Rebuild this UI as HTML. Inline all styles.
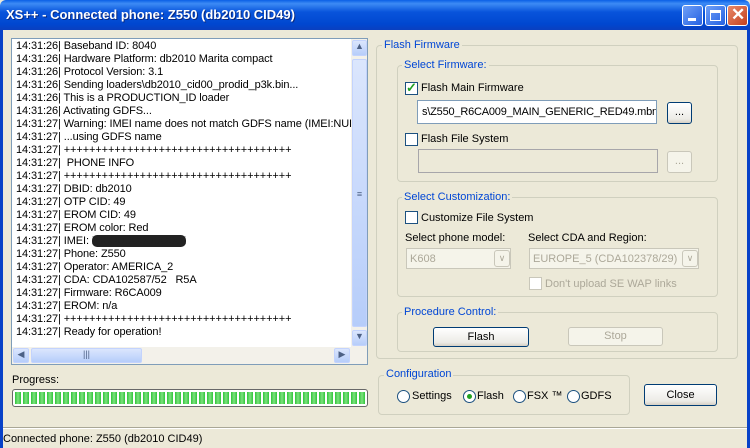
<!DOCTYPE html>
<html><head><meta charset="utf-8"><style>
*{box-sizing:border-box}
body{margin:0;width:750px;height:448px;overflow:hidden;background:#ECE9D8;font-family:"Liberation Sans",sans-serif;font-size:11px;color:#000;position:relative}
.abs{position:absolute}
.title{left:0;top:0;width:750px;height:30px;background:linear-gradient(#0A5FE6 0%,#3D8BF5 12%,#0854DB 40%,#0047D0 80%,#0A3FBF 100%);border-radius:6px 6px 0 0}
.title span{position:absolute;left:6px;top:7px;color:#fff;font-weight:bold;font-size:13px;text-shadow:1px 1px #0a2a80}
.wb{top:5px;width:21px;height:21px;border:1px solid #fff;border-radius:3px;background:linear-gradient(135deg,#6fa0f7,#2561e2)}
.frameL{left:0;top:30px;width:3px;height:418px;background:#0842c8}
.frameR{left:747px;top:30px;width:3px;height:418px;background:#0842c8}
.log{left:11px;top:38px;width:357px;height:327px;background:#fff;border:1px solid #7F9DB9;overflow:hidden}
.log pre{margin:0;position:absolute;left:4px;top:1px;font:11px/13px "Liberation Sans",sans-serif;letter-spacing:-0.1px}
.sb{background:#F3F1EA}
.sbtn{background:linear-gradient(#dbe6fd,#b6cdfa);border:1px solid #c3d3fd;border-radius:2px;color:#4d6185;font-size:9px;text-align:center}
.grp{border:1px solid #D0D0BF;border-radius:4px}
.lg{background:#ECE9D8;color:#0046D5;padding:0 2px}
.btn{border:1px solid #003C74;border-radius:3px;background:linear-gradient(#fff,#ECEBE6 80%,#D6D0C5);text-align:center}
.dis{border:1px solid #C9C7BA;border-radius:3px;background:#F5F4EA;color:#ACA899;text-align:center}
.cb{width:13px;height:13px;border:1px solid #1C5180;background:#fff}
.rd{width:13px;height:13px;border:1px solid #1C5180;border-radius:50%;background:#fff}
</style></head><body>
<div class="abs title"><span>XS++ - Connected phone: Z550 (db2010 CID49)</span>
<div class="abs wb" style="left:682px"><div class="abs" style="left:5px;top:12px;width:8px;height:3px;background:#fff"></div></div>
<div class="abs wb" style="left:705px"><div class="abs" style="left:4px;top:4px;width:11px;height:11px;border:1px solid #fff;border-top-width:3px"></div></div>
<div class="abs wb" style="left:727px;background:linear-gradient(135deg,#e88a6a,#c4401e)"><div class="abs" style="left:3px;top:-1px;color:#fff;font-size:17px;font-weight:bold">✕</div></div>
</div>
<div class="abs frameL"></div><div class="abs frameR"></div>

<div class="abs log"><pre>14:31:26| Baseband ID: 8040
14:31:26| Hardware Platform: db2010 Marita compact
14:31:26| Protocol Version: 3.1
14:31:26| Sending loaders\db2010_cid00_prodid_p3k.bin...
14:31:26| This is a PRODUCTION_ID loader
14:31:26| Activating GDFS...
14:31:27| Warning: IMEI name does not match GDFS name (IMEI:NUL
14:31:27| ...using GDFS name
14:31:27| ++++++++++++++++++++++++++++++++++++
14:31:27|  PHONE INFO
14:31:27| ++++++++++++++++++++++++++++++++++++
14:31:27| DBID: db2010
14:31:27| OTP CID: 49
14:31:27| EROM CID: 49
14:31:27| EROM color: Red
14:31:27| IMEI: <span style="background:#222;color:#222;border-radius:5px">XXXXXXXXXXXXX</span>
14:31:27| Phone: Z550
14:31:27| Operator: AMERICA_2
14:31:27| CDA: CDA102587/52   R5A
14:31:27| Firmware: R6CA009
14:31:27| EROM: n/a
14:31:27| ++++++++++++++++++++++++++++++++++++
14:31:27| Ready for operation!</pre>
<div class="abs sb" style="left:339px;top:0;width:17px;height:326px"></div>
<div class="abs sbtn" style="left:340px;top:1px;width:15px;height:16px">▲</div>
<div class="abs sbtn" style="left:340px;top:20px;width:15px;height:268px;line-height:268px">≡</div>
<div class="abs sbtn" style="left:340px;top:291px;width:15px;height:16px">▼</div>
<div class="abs sb" style="left:0;top:308px;width:339px;height:17px"></div>
<div class="abs sbtn" style="left:1px;top:309px;width:16px;height:15px">◀</div>
<div class="abs sbtn" style="left:19px;top:309px;width:111px;height:15px">|||</div>
<div class="abs sbtn" style="left:322px;top:309px;width:16px;height:15px">▶</div>
</div>

<div class="abs" style="left:12px;top:374px">Progress:</div>
<div class="abs" style="left:12px;top:389px;width:356px;height:18px;border:1px solid #686868;border-radius:3px;background:#fff;padding:2px;background-clip:padding-box">
<div style="width:100%;height:100%;background:repeating-linear-gradient(90deg,#2fc63a 0,#7ee07f 3px,#2fc63a 6px,#fff 6px,#fff 8px)"></div></div>

<div class="abs grp" style="left:376px;top:45px;width:362px;height:314px"></div>
<div class="abs lg" style="left:382px;top:39px">Flash Firmware</div>
<div class="abs grp" style="left:397px;top:65px;width:321px;height:117px"></div>
<div class="abs lg" style="left:402px;top:59px">Select Firmware:</div>
<div class="abs cb" style="left:405px;top:82px"><span class="abs" style="left:0;top:-3px;color:#21a121;font-size:13px;font-weight:bold">✓</span></div>
<div class="abs" style="left:421px;top:82px">Flash Main Firmware</div>
<div class="abs" style="left:417px;top:100px;width:240px;height:24px;border:1px solid #7F9DB9;background:#fff;padding:5px 0 0 4px;font-size:11px;letter-spacing:-0.2px;white-space:nowrap;overflow:hidden">s\Z550_R6CA009_MAIN_GENERIC_RED49.mbn</div>
<div class="abs btn" style="left:667px;top:102px;width:25px;height:22px;line-height:18px">...</div>
<div class="abs cb" style="left:405px;top:133px"></div>
<div class="abs" style="left:421px;top:133px">Flash File System</div>
<div class="abs" style="left:418px;top:149px;width:240px;height:24px;border:1px solid #A7A6AA;background:#ECE9D8"></div>
<div class="abs dis" style="left:667px;top:151px;width:25px;height:22px;line-height:18px">...</div>

<div class="abs grp" style="left:397px;top:197px;width:321px;height:100px"></div>
<div class="abs lg" style="left:402px;top:191px">Select Customization:</div>
<div class="abs cb" style="left:405px;top:211px"></div>
<div class="abs" style="left:421px;top:212px">Customize File System</div>
<div class="abs" style="left:405px;top:232px">Select phone model:</div>
<div class="abs" style="left:528px;top:232px">Select CDA and Region:</div>
<div class="abs" style="left:406px;top:248px;width:105px;height:21px;border:1px solid #C9C7BA;background:#F5F4EA;color:#ACA899;padding:4px 3px">K608</div>
<div class="abs dis" style="left:494px;top:250px;width:16px;height:17px;font-size:9px;line-height:15px">∨</div>
<div class="abs" style="left:529px;top:248px;width:170px;height:21px;border:1px solid #C9C7BA;background:#F5F4EA;color:#ACA899;padding:4px 3px">EUROPE_5 (CDA102378/29)</div>
<div class="abs dis" style="left:682px;top:250px;width:16px;height:17px;font-size:9px;line-height:15px">∨</div>
<div class="abs" style="left:529px;top:277px;width:13px;height:13px;border:1px solid #C9C7BA;background:#fff"></div>
<div class="abs" style="left:545px;top:278px;color:#ACA899">Don't upload SE WAP links</div>

<div class="abs grp" style="left:397px;top:312px;width:321px;height:40px"></div>
<div class="abs lg" style="left:402px;top:306px">Procedure Control:</div>
<div class="abs btn" style="left:433px;top:327px;width:96px;height:20px;line-height:18px">Flash</div>
<div class="abs dis" style="left:568px;top:327px;width:95px;height:19px;line-height:17px">Stop</div>

<div class="abs grp" style="left:378px;top:375px;width:252px;height:40px"></div>
<div class="abs lg" style="left:384px;top:368px">Configuration</div>
<div class="abs rd" style="left:397px;top:390px"></div><div class="abs" style="left:412px;top:390px">Settings</div>
<div class="abs rd" style="left:463px;top:390px"><div class="abs" style="left:3px;top:3px;width:5px;height:5px;border-radius:50%;background:#21a121"></div></div><div class="abs" style="left:477px;top:390px">Flash</div>
<div class="abs rd" style="left:513px;top:390px"></div><div class="abs" style="left:527px;top:390px">FSX ™</div>
<div class="abs rd" style="left:567px;top:390px"></div><div class="abs" style="left:581px;top:390px">GDFS</div>
<div class="abs btn" style="left:644px;top:384px;width:73px;height:22px;line-height:20px">Close</div>

<div class="abs" style="left:3px;top:427px;width:744px;height:1px;background:#A9A796"></div>
<div class="abs" style="left:3px;top:428px;width:744px;height:1px;background:#fff"></div>
<div class="abs" style="left:3px;top:433px">Connected phone: Z550 (db2010 CID49)</div>
</body></html>
